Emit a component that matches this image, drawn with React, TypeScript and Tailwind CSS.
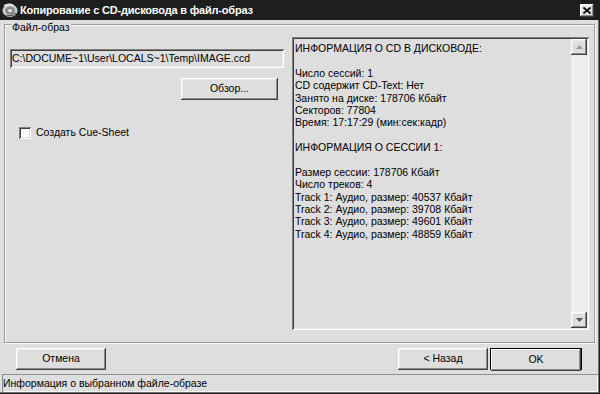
import React from "react";

const raised =
  "bg-[#dedede] shadow-[inset_-1px_-1px_#404040,inset_1px_1px_#ffffff,inset_-2px_-2px_#8a8a8a,inset_2px_2px_#ececec]";
const sunken =
  "shadow-[inset_1px_1px_#808080,inset_-1px_-1px_#ffffff,inset_2px_2px_#404040,inset_-2px_-2px_#e8e8e8]";

function Btn({ children, className = "" }: { children: React.ReactNode; className?: string }) {
  return (
    <div className={`flex items-center justify-center h-[22px] w-[90px] ${raised} ${className}`}>
      {children}
    </div>
  );
}

function ScrollArrow({ up }: { up: boolean }) {
  return (
    <div className={`w-[16px] h-[16px] flex items-center justify-center ${raised}`}>
      <svg width="7" height="4" viewBox="0 0 7 4">
        {up ? <path d="M3.5 0 L7 4 L0 4 Z" fill="#9a9a9a" /> : <path d="M0 0 L7 0 L3.5 4 Z" fill="#555" />}
      </svg>
    </div>
  );
}

const lines = [
  "ИНФОРМАЦИЯ О CD В ДИСКОВОДЕ:",
  "",
  "Число сессий: 1",
  "CD содержит CD-Text: Нет",
  "Занято на диске: 178706 Кбайт",
  "Секторов: 77804",
  "Время: 17:17:29 (мин:сек:кадр)",
  "",
  "ИНФОРМАЦИЯ О СЕССИИ 1:",
  "",
  "Размер сессии: 178706 Кбайт",
  "Число треков: 4",
  "Track 1: Аудио, размер: 40537 Кбайт",
  "Track 2: Аудио, размер: 39708 Кбайт",
  "Track 3: Аудио, размер: 49601 Кбайт",
  "Track 4: Аудио, размер: 48859 Кбайт",
];

export default function App() {
  return (
    <div
      className="w-[600px] h-[394px] bg-[#dedede] flex flex-col text-[10.5px] text-black overflow-hidden shadow-[inset_-1px_-1px_#202020,inset_-2px_-2px_#707070]"
      style={{ fontFamily: '"Liberation Sans", Arial, sans-serif' }}
    >
      {/* Title bar */}
      <div className="h-[20px] bg-[#1e1e1e] flex items-center pl-[2px] pr-[6px] shrink-0">
        <svg width="16" height="16" viewBox="0 0 16 16" className="shrink-0">
          <ellipse cx="8" cy="8.5" rx="7.5" ry="6.5" fill="#cfcfcf" />
          <ellipse cx="8" cy="8.5" rx="5" ry="4" fill="#8a8a8a" />
          <ellipse cx="8" cy="8.5" rx="2" ry="1.6" fill="#e8e8e8" />
          <path d="M2 4 Q6 1 11 3" stroke="#f0f0f0" strokeWidth="1.5" fill="none" />
          <path d="M4 13 Q9 15 14 11" stroke="#555" strokeWidth="1.2" fill="none" />
        </svg>
        <span className="ml-[2px] text-white font-bold text-[11px] tracking-[-0.2px] leading-[14px] whitespace-nowrap">
          Копирование с CD-дисковода в файл-образ
        </span>
        <div className={`ml-auto w-[14px] h-[13px] flex items-center justify-center ${raised}`}>
          <svg width="8" height="7" viewBox="0 0 8 7">
            <path d="M0.5 0.5 L7.5 6.5 M7.5 0.5 L0.5 6.5" stroke="#000" strokeWidth="1.6" />
          </svg>
        </div>
      </div>

      {/* Group box */}
      <div className="mt-[4px] ml-[4px] mr-[5px] h-[319px] border border-[#9a9a9a] shadow-[inset_1px_1px_#f8f8f8,1px_1px_#f8f8f8] flex flex-col">
        <span className="-mt-[4px] ml-[6px] px-[1px] w-fit bg-[#dedede] leading-[13px]">Файл-образ</span>
        <div className="flex mt-[3px] pl-[5px]">
          {/* Left column */}
          <div className="w-[274px] flex flex-col">
            <div className={`mt-[12px] h-[19px] flex items-center pl-[2px] leading-[13px] whitespace-nowrap ${sunken}`}>
              C:\DOCUME~1\User\LOCALS~1\Temp\IMAGE.ccd
            </div>
            <Btn className="mt-[10px] self-end mr-[6px] w-[97px] h-[21px]">Обзор...</Btn>
            <div className="mt-[26px] ml-[9px] flex items-center">
              <div className="w-[12px] h-[12px] bg-white shadow-[inset_1px_1px_#808080,inset_-1px_-1px_#ffffff,inset_2px_2px_#404040,inset_-2px_-2px_#dedede]" />
              <span className="ml-[5px] leading-[13px]">Создать Cue-Sheet</span>
            </div>
          </div>
          {/* Info panel */}
          <div className={`ml-[8px] w-[297px] h-[293px] flex p-[2px] ${sunken}`}>
            <div className="flex-1 pl-[1px] pt-[3px]">
              {lines.map((l, i) => (
                <div key={i} className="h-[12.4px] leading-[12.4px] whitespace-nowrap">
                  {l}
                </div>
              ))}
            </div>
            <div className="w-[16px] flex flex-col bg-[#eeeeee]">
              <ScrollArrow up />
              <div className="flex-1" />
              <ScrollArrow up={false} />
            </div>
          </div>
        </div>
      </div>

      {/* Buttons */}
      <div className="mt-[5px] h-[22px] flex shrink-0">
        <Btn className="ml-[16px]">Отмена</Btn>
        <div className="flex-1" />
        <Btn>&lt; Назад</Btn>
        <div className="ml-[2px] mr-[18px] border border-black">
          <Btn className="w-[88px] h-[20px] shadow-[inset_-1px_-1px_#404040,inset_1px_1px_#ffffff,inset_-2px_-2px_#8a8a8a]">
            OK
          </Btn>
        </div>
      </div>

      {/* Status bar */}
      <div className="mt-[4px] mx-[2px] h-[18px] flex items-center pl-[1px] shadow-[inset_1px_1px_#909090,inset_-1px_-1px_#ffffff] leading-[13px]">
        Информация о выбранном файле-образе
      </div>
    </div>
  );
}
